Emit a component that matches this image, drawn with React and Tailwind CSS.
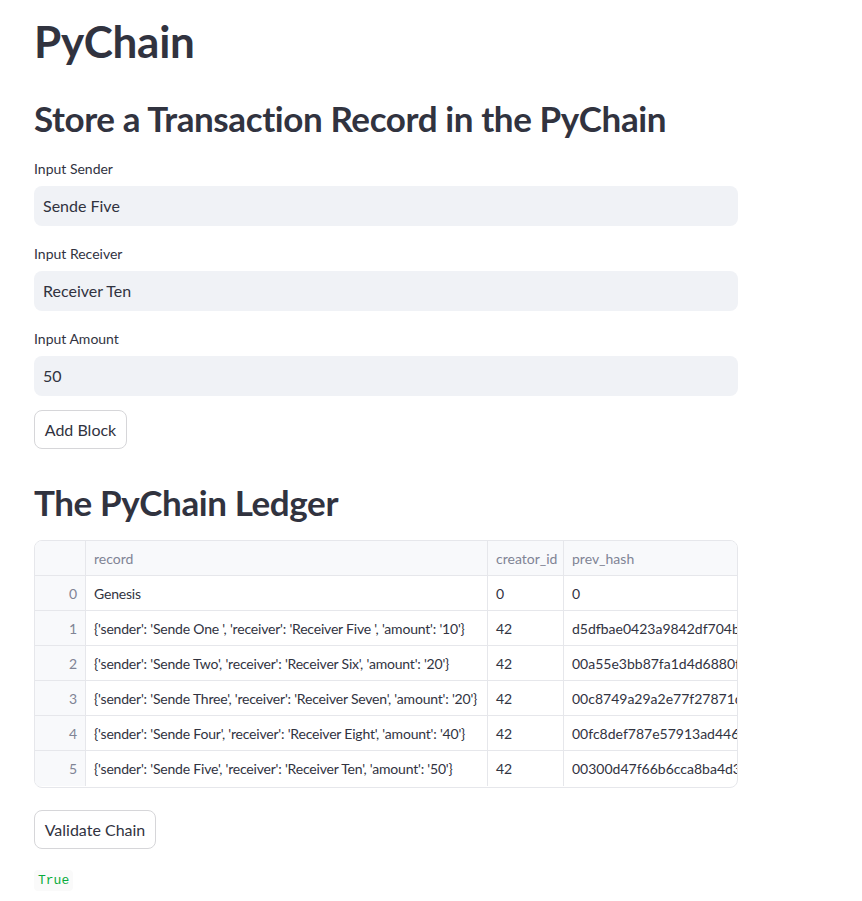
import React from "react";

const rows = [
  ["0", "Genesis", "0", "0"],
  ["1", "{'sender': 'Sende One ', 'receiver': 'Receiver Five ', 'amount': '10'}", "42", "d5dfbae0423a9842df704bf83a1c"],
  ["2", "{'sender': 'Sende Two', 'receiver': 'Receiver Six', 'amount': '20'}", "42", "00a55e3bb87fa1d4d6880f5e8c21"],
  ["3", "{'sender': 'Sende Three', 'receiver': 'Receiver Seven', 'amount': '20'}", "42", "00c8749a29a2e77f27871d042b1e"],
  ["4", "{'sender': 'Sende Four', 'receiver': 'Receiver Eight', 'amount': '40'}", "42", "00fc8def787e57913ad44609913a"],
  ["5", "{'sender': 'Sende Five', 'receiver': 'Receiver Ten', 'amount': '50'}", "42", "00300d47f66b6cca8ba4d351a7c0"],
];

function Field({ label, value }) {
  return (
    <div className="flex flex-col">
      <div className="text-[14px] leading-[20px] text-[#31333f] mb-[7px]">{label}</div>
      <div className="h-[40px] rounded-[8px] bg-[#f0f2f6] flex items-center px-[9px] text-[16px] text-[#31333f]">{value}</div>
    </div>
  );
}

function Button({ children, w }) {
  return (
    <div className="flex">
      <div className={`h-[39px] ${w} rounded-[8px] border border-[#d6d6d9] bg-white flex items-center justify-center text-[16px] text-[#31333f]`}>{children}</div>
    </div>
  );
}

export default function App() {
  return (
    <div className="w-[862px] h-[901px] bg-white overflow-hidden" style={{ fontFamily: "Lato, 'Noto Sans', sans-serif" }}>
      <div className="pl-[34px] w-[738px]">
        <h1 className="text-[44px] leading-[56px] font-bold text-[#31333f] pt-[13px] tracking-[-0.3px]">PyChain</h1>
        <h2 className="text-[35px] leading-[44px] font-bold text-[#31333f] mt-[27px] tracking-[-0.4px]">Store a Transaction Record in the PyChain</h2>
        <div className="mt-[19px] flex flex-col gap-[18px]">
          <Field label="Input Sender" value="Sende Five" />
          <Field label="Input Receiver" value="Receiver Ten" />
          <Field label="Input Amount" value="50" />
        </div>
        <div className="mt-[14px]">
          <Button w="w-[93px]">Add Block</Button>
        </div>
        <h2 className="text-[35px] leading-[44px] font-bold text-[#31333f] mt-[31px] tracking-[-0.4px]">The PyChain Ledger</h2>
        <div className="mt-[16px] w-[704px] h-[248px] rounded-[8px] border border-[#e6e7eb] overflow-hidden text-[14px] text-[#31333f]">
          <div className="flex h-[35px] bg-[#f8f9fb] border-b border-[#e6e7eb] text-[#808495]">
            <div className="w-[51px] shrink-0 border-r border-[#e6e7eb]"></div>
            <div className="w-[402px] shrink-0 border-r border-[#e6e7eb] px-[8px] flex items-center">record</div>
            <div className="w-[76px] shrink-0 border-r border-[#e6e7eb] px-[8px] flex items-center">creator_id</div>
            <div className="flex-1 px-[8px] flex items-center whitespace-nowrap overflow-hidden">prev_hash</div>
          </div>
          {rows.map((r, i) => (
            <div key={i} className={`flex h-[35px] ${i < rows.length - 1 ? "border-b border-[#e6e7eb]" : ""}`}>
              <div className="w-[51px] shrink-0 border-r border-[#e6e7eb] bg-[#f8f9fb] px-[8px] flex items-center justify-end text-[#808495]">{r[0]}</div>
              <div className="w-[402px] shrink-0 border-r border-[#e6e7eb] px-[8px] flex items-center whitespace-nowrap overflow-hidden tracking-[-0.2px]">{r[1]}</div>
              <div className="w-[76px] shrink-0 border-r border-[#e6e7eb] px-[8px] flex items-center">{r[2]}</div>
              <div className="flex-1 pl-[8px] flex items-center whitespace-nowrap overflow-hidden">{r[3]}</div>
            </div>
          ))}
        </div>
        <div className="mt-[22px]">
          <Button w="w-[122px]">Validate Chain</Button>
        </div>
        <div className="mt-[21px] flex">
          <div className="h-[21px] px-[4px] rounded-[4px] bg-[#fafafa] text-[#09ab3b] text-[13px] flex items-center" style={{ fontFamily: "'Liberation Mono', 'DejaVu Sans Mono', monospace" }}>True</div>
        </div>
      </div>
    </div>
  );
}
